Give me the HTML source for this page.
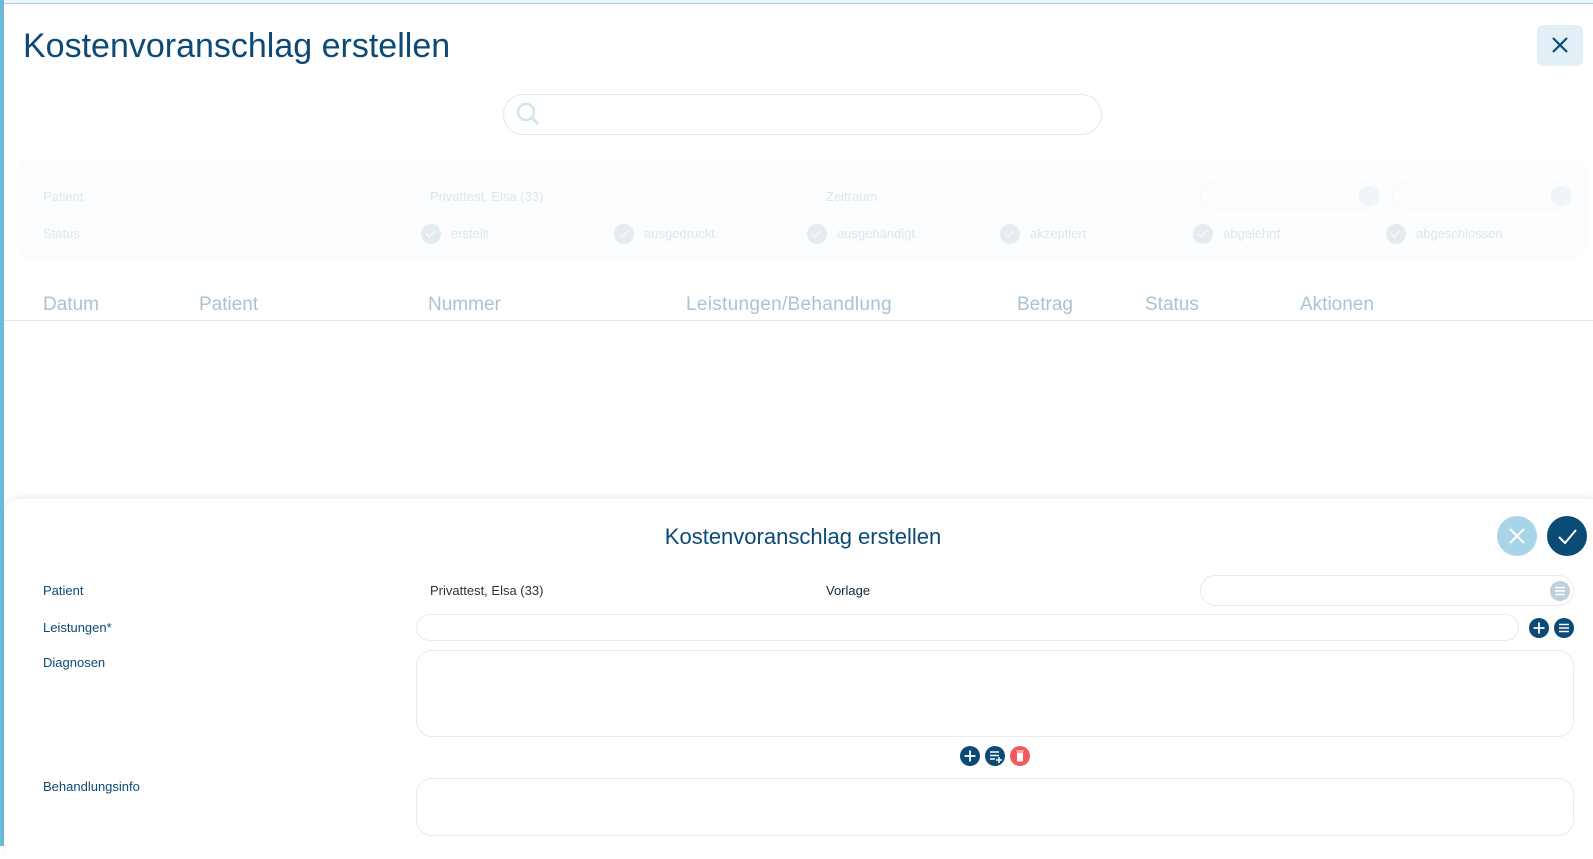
<!DOCTYPE html>
<html><head><meta charset="utf-8"><style>
*{box-sizing:border-box;margin:0;padding:0}
body{width:1593px;height:846px;overflow:hidden;background:#fff;font-family:"Liberation Sans",sans-serif;position:relative;color:#0b4a77}
.a{position:absolute;white-space:nowrap}
.lbl{font-size:13px;color:#0b4a77}
.f{font-size:13px;color:#dde6ec}
.th{font-size:19px;color:#a9c3d3;top:294px}
.chk{position:absolute;width:20px;height:20px;border-radius:50%;background:#e4ecf1}
.chk:after{content:"";position:absolute;left:7px;top:4px;width:4px;height:8px;border:solid #fff;border-width:0 1.5px 1.5px 0;transform:rotate(45deg)}
.circ{position:absolute;width:20px;height:20px;border-radius:50%;background:#0b4a77}
.inp{position:absolute;border:1px solid #e3ecf1;border-radius:16px;background:#fff}
</style></head><body>
<div class="a" style="left:0;top:0;width:1593px;height:4px;background:#edf6fa;border-bottom:1px solid #a8d0e2"></div>
<div class="a" style="left:0;top:0;width:4px;height:846px;background:#6bbad8"></div>
<div class="a" style="left:23px;top:27px;font-size:34px;color:#0b4a77">Kostenvoranschlag erstellen</div>
<div class="a" style="left:1537px;top:25px;width:46px;height:41px;background:#e1eff6;border-radius:6px">
<svg width="46" height="41"><path d="M16 13L30 27M30 13L16 27" stroke="#0b4a77" stroke-width="2.2"/></svg></div>
<div class="a" style="left:503px;top:94px;width:599px;height:41px;border:1.5px solid #d9ebf3;border-radius:21px">
<svg width="40" height="38" style="position:absolute;left:6px;top:0"><circle cx="16" cy="17" r="8" fill="none" stroke="#cfe5f0" stroke-width="2.5"/><path d="M22 23l6 6" stroke="#cfe5f0" stroke-width="2.8"/></svg></div>
<div class="a" style="left:18px;top:158px;width:1569px;height:102px;background:#fbfdfe;border-radius:14px"></div>
<div class="a f" style="left:43px;top:189px">Patient</div>
<div class="a f" style="left:430px;top:189px">Privattest, Elsa (33)</div>
<div class="a f" style="left:826px;top:189px">Zeitraum</div>
<div class="inp" style="left:1200px;top:182px;width:180px;height:27px;border-color:#f6f9fb;background:#fcfdfe"></div>
<div class="a" style="left:1359px;top:186px;width:20px;height:20px;border-radius:50%;background:#f0f4f7"></div>
<div class="inp" style="left:1392px;top:182px;width:180px;height:27px;border-color:#f6f9fb;background:#fcfdfe"></div>
<div class="a" style="left:1551px;top:186px;width:20px;height:20px;border-radius:50%;background:#f0f4f7"></div>
<div class="a f" style="left:43px;top:226px">Status</div>
<div class="chk" style="left:421px;top:224px"></div><div class="a f" style="left:451px;top:226px">erstellt</div>
<div class="chk" style="left:614px;top:224px"></div><div class="a f" style="left:644px;top:226px">ausgedruckt</div>
<div class="chk" style="left:807px;top:224px"></div><div class="a f" style="left:837px;top:226px">ausgehändigt</div>
<div class="chk" style="left:1000px;top:224px"></div><div class="a f" style="left:1030px;top:226px">akzeptiert</div>
<div class="chk" style="left:1193px;top:224px"></div><div class="a f" style="left:1223px;top:226px">abgelehnt</div>
<div class="chk" style="left:1386px;top:224px"></div><div class="a f" style="left:1416px;top:226px">abgeschlossen</div>
<div class="a th" style="left:43px">Datum</div>
<div class="a th" style="left:199px">Patient</div>
<div class="a th" style="left:428px">Nummer</div>
<div class="a th" style="left:686px;letter-spacing:0.3px">Leistungen/Behandlung</div>
<div class="a th" style="left:1017px">Betrag</div>
<div class="a th" style="left:1145px">Status</div>
<div class="a th" style="left:1300px">Aktionen</div>
<div class="a" style="left:4px;top:320px;width:1589px;height:1px;background:#dbe9f0"></div>
<div class="a" style="left:5px;top:499px;width:1600px;height:360px;background:#fff;border-radius:14px 14px 0 0;box-shadow:0 -3px 6px rgba(0,0,0,0.06)"></div>
<div class="a" style="left:803px;top:524px;transform:translateX(-50%);font-size:22px;color:#0b4a77">Kostenvoranschlag erstellen</div>
<div class="a" style="left:1497px;top:516px;width:40px;height:40px;border-radius:50%;background:#a7d5e7">
<svg width="40" height="40"><path d="M13 13L27 27M27 13L13 27" stroke="#fff" stroke-width="2"/></svg></div>
<div class="a" style="left:1547px;top:516px;width:40px;height:40px;border-radius:50%;background:#0b4a77">
<svg width="40" height="40"><path d="M12 21l6 6 11-13" fill="none" stroke="#fff" stroke-width="2"/></svg></div>
<div class="a lbl" style="left:43px;top:583px">Patient</div>
<div class="a lbl" style="left:430px;top:583px;color:#333">Privattest, Elsa (33)</div>
<div class="a lbl" style="left:826px;top:583px;color:#0b2a40">Vorlage</div>
<div class="inp" style="left:1200px;top:575px;width:374px;height:31px"></div>
<div class="a" style="left:1550px;top:581px;width:20px;height:20px;border-radius:50%;background:#bdd0dd">
<svg width="20" height="20"><path d="M5 6.5h10M5 10h10M5 13.5h10" stroke="#fff" stroke-width="1.5"/></svg></div>
<div class="a lbl" style="left:43px;top:620px">Leistungen*</div>
<div class="inp" style="left:416px;top:614px;width:1103px;height:27px"></div>
<div class="circ" style="left:1529px;top:618px"><svg width="20" height="20"><path d="M10 4.5v11M4.5 10h11" stroke="#fff" stroke-width="1.8"/></svg></div>
<div class="circ" style="left:1554px;top:618px"><svg width="20" height="20"><path d="M5 6.5h10M5 10h10M5 13.5h10" stroke="#fff" stroke-width="1.5"/></svg></div>
<div class="a lbl" style="left:43px;top:655px">Diagnosen</div>
<div class="inp" style="left:416px;top:650px;width:1158px;height:87px"></div>
<div class="circ" style="left:960px;top:746px"><svg width="20" height="20"><path d="M10 4.5v11M4.5 10h11" stroke="#fff" stroke-width="1.8"/></svg></div>
<div class="circ" style="left:985px;top:746px"><svg width="20" height="20"><path d="M5 6h9M5 9.5h9M5 13h5M14 11v6M11 14h6" stroke="#fff" stroke-width="1.5"/></svg></div>
<div class="circ" style="left:1010px;top:746px;background:#f25a5a"><svg width="20" height="20"><path d="M6.5 5h7M7.5 7h5v8h-5z" fill="#fff" stroke="#fff" stroke-width="1"/></svg></div>
<div class="a lbl" style="left:43px;top:779px">Behandlungsinfo</div>
<div class="inp" style="left:416px;top:778px;width:1158px;height:58px"></div>
</body></html>
